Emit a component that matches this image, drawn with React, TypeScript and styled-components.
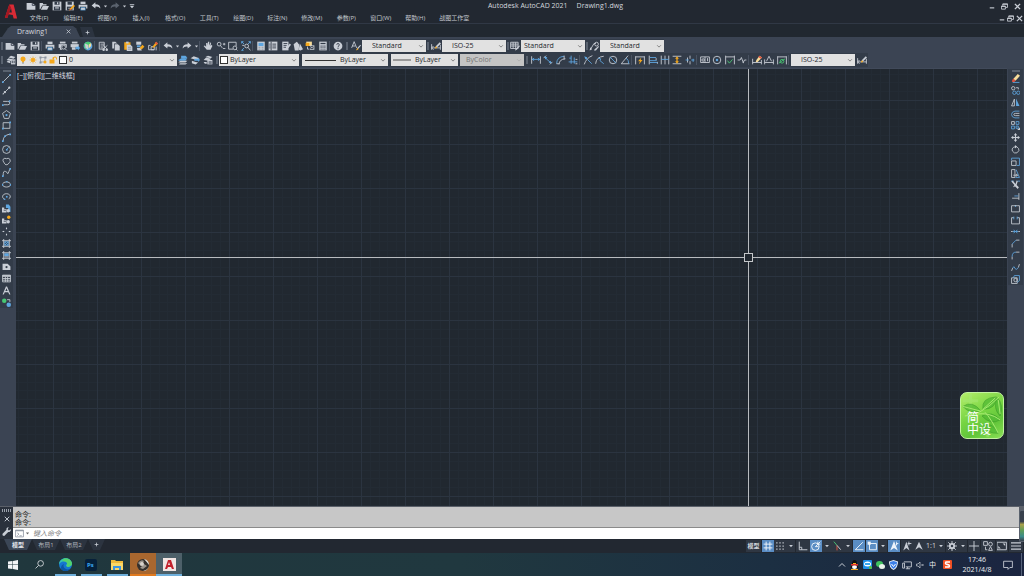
import React from "react";
import styled, { createGlobalStyle, css } from "styled-components";

const color = {
  chrome: "#222831",
  dock: "#3b4453",
  bar: "#333c49",
  canvas: "#212830",
  line: "#c9ced6",
  blue: "#5fa6e0",
  field: "#e1e1e1",
};

const Global = createGlobalStyle`
  *, *::before, *::after { box-sizing: border-box; }
  html, body { margin: 0; background: ${color.chrome}; }
  body, button, input, select {
    font-family: "Open Sans", "Noto Sans CJK SC", sans-serif;
    font-size: 7px;
    line-height: 10px;
  }
  button, input, select { border: 0; padding: 0; margin: 0; background: none; color: inherit; }
`;

/* ---------- icons ---------- */

type Shape = [string, string];

const tones: Record<string, string> = {
  w: "#c9ced6",
  b: "#5fa6e0",
  y: "#f5a81c",
  c: "#f7dc9a",
  r: "#e0523f",
  g: "#48c774",
  k: "#333c49",
  n: "#8b939f",
};

const circle = (x: number, y: number, r: number) =>
  `M${x - r} ${y}a${r} ${r} 0 1 0 ${2 * r} 0a${r} ${r} 0 1 0 ${-2 * r} 0`;
const box = (x: number, y: number, w: number, h: number) => `M${x} ${y}h${w}v${h}h${-w}z`;

/* A lower-case tone strokes the path, an upper-case tone fills it. */
const icons: Record<string, Shape[]> = {
  New: [["W", "M1 3h9l5 4v7H1z"], ["k", "M10 3v4h5"]],
  Open: [["W", "M1 3h5l1 2h5v2H5l-3 6H1z"], ["W", "M6 8h10l-3 6H3z"]],
  Save: [["W", box(1, 1, 14, 14)], ["K", box(4, 1, 8, 5)], ["K", box(3, 9, 10, 6)], ["W", box(5, 10, 6, 1)], ["W", box(5, 12, 6, 1)], ["W", box(8, 2, 2, 3)]],
  "Save As": [["W", box(1, 1, 13, 14)], ["K", box(4, 1, 7, 5)], ["K", box(3, 9, 9, 6)], ["W", box(5, 11, 4, 1)], ["Y", "M14 6l2 2-6 6-3 1 1-3z"], ["R", "M8 12l2 2-3 1z"]],
  Plot: [["W", box(4, 1, 8, 4)], ["W", "M1 6h14v6h-2V9H3v3H1z"], ["B", box(4, 10, 8, 5)], ["W", box(5, 11, 6, 3)]],
  "Plot Preview": [["W", box(3, 1, 9, 3)], ["W", "M1 5h13v6H1z"], ["W", box(3, 11, 4, 3)], ["K", circle(9, 10, 4)], ["w", circle(9, 10, 3)], ["w", "M11 12l3 3"]],
  Publish: [["W", box(3, 1, 9, 3)], ["W", "M1 5h13v5H1z"], ["W", box(3, 10, 6, 4)], ["B", "M9 9h4V7l3 4-3 4v-2H9z"]],
  "3D Print": [["B", circle(8, 8, 7)], ["G", "M3 3q5-4 10 0l-4 5-3 6Q-1 10 3 3z"], ["W", "M3 4l5 2v7l-4-2z"], ["C", "M9 6l4-3v5l-4 4z"]],
  Cut: [["w", box(2, 2, 8, 11)], ["w", "M4 5h6M4 8h4M4 11h4"], ["w", "M8 7l7 6M15 7l-7 6"], ["W", circle(14, 14, 2)], ["W", circle(9, 14, 2)]],
  Copy: [["W", "M2 1h5l3 3v8H2z"], ["K", "M5 4h6l4 4v8H5z"], ["W", "M6 5h5l3 3v7H6z"]],
  Paste: [["Y", box(2, 2, 10, 12)], ["W", box(5, 1, 4, 3)], ["W", "M6 6h6l3 3v7H6z"], ["n", "M8 10h5M8 13h5"]],
  "Match Properties": [["W", box(2, 1, 8, 5)], ["B", box(3, 7, 6, 3)], ["Y", "M12 6l3 3-5 5-3-3z"], ["W", "M3 11h5l3 4H4z"]],
  "Block Editor": [["w", "M1 7v7h9M1 7h3M5 9h5v5H5z"], ["Y", "M13 1l3 3-6 6-3 1 1-3z"], ["R", "M13 1l3 3-2 2-3-3z"], ["w", "M13 9v6"]],
  Undo: [["W", "M1 7l6-5v3q8 0 8 7-3-4-8-3v3z"]],
  Redo: [["W", "M15 7L9 2v3q-8 0-8 7 3-4 8-3v3z"]],
  Pan: [["W", "M3 7l2 2V3h2v4l1-6h2v6l2-5 1 1-1 5 2-2 1 2-3 6H6L1 8z"]],
  "Zoom Realtime": [["w", circle(5, 5, 3)], ["w", "M7 7l3 4M11 5h4M13 3v4M11 12h4"]],
  "Zoom Window": [["w", "M1 2h12v6M1 2v11h7"], ["w", circle(11, 11, 3)], ["w", "M13 13l2 2"]],
  "Zoom Extents": [["b", "M1 1l4 4M15 1l-4 4M1 15l4-4M1 1h3M1 1v3M15 1h-3M15 1v3M1 15h3"], ["w", circle(9, 8, 3)], ["w", "M11 10l4 5M2 7h3"]],
  Properties: [["W", box(2, 1, 12, 14)], ["B", box(4, 3, 8, 5)], ["n", "M4 10h3M9 10h3M4 13h3M9 13h3"]],
  DesignCenter: [["W", box(1, 1, 14, 14)], ["k", "M5 1v14M7 5h6M7 8h6M7 11h6M2 5h2M2 8h2M2 11h2"]],
  "Tool Palettes": [["W", box(2, 1, 10, 14)], ["k", "M4 4h6M4 7h5M4 10h4"], ["W", "M14 4l2 2-4 5-3 1 1-3z"]],
  "Sheet Set": [["W", "M1 5l5-4 4 4-1 10H3z"], ["k", "M9 3l5 10"], ["W", "M11 4l5 9-4 2-3-1z"]],
  Markup: [["C", box(2, 1, 9, 7)], ["Y", box(1, 3, 6, 5)], ["W", box(8, 7, 7, 7)], ["k", box(9, 9, 4, 3)], ["w", "M4 9v4h3"]],
  Calculator: [["W", box(2, 1, 12, 14)], ["K", box(4, 3, 8, 2)], ["k", "M4 8h2M7 8h2M10 8h2M4 10h2M7 10h2M10 10h2M4 13h2M7 13h2M10 13h2"]],
  Help: [["W", circle(8, 8, 7)], ["k", "M6 6q0-2 2-2t2 2-2 3v1M8 11v2"]],
  "Text Style": [["w", "M1 11L5 1l4 10M2 8h5"], ["W", "M15 6l1 1-5 6-2 1 1-3z"], ["Y", "M10 11l2 2-4 2z"]],
  "Dimension Style": [["w", "M1 5v9M15 6v8M1 11h14M4 8l-3 3 3 3"], ["W", "M14 2l2 2-6 6-3 1 1-3z"], ["Y", "M8 8l2 3-4 1z"]],
  "Table Style": [["w", box(1, 2, 12, 10)], ["w", "M1 5h12M1 8h12M5 2v10M9 2v10"], ["W", "M15 7l1 1-5 6-3 1 1-3z"]],
  "Multileader Style": [["w", "M2 14L8 4h3"], ["w", circle(12, 5, 3)], ["W", "M15 8l1 1-5 6-3 0 1-2z"], ["W", "M1 15l1-5 3 3z"]],
  "Layer Properties": [["W", "M4 4l4-3 7 2-3 3z"], ["W", "M1 8l3-3 7 2-2 3z"], ["W", box(8, 7, 7, 8)], ["k", "M10 9v4M13 9v4"], ["W", "M1 11l2-2 4 1v3z"]],
  "Make Current": [["B", "M5 1h7l3 3-5 2-5-1z"], ["B", "M1 8l4-3h10l-3 4H1z"], ["W", "M1 11l3-2h11l-3 3H1z"], ["W", "M2 14l2-1h11l-3 2H2z"]],
  "Layer Previous": [["W", "M1 5l5-3 9 3-5 3z"], ["B", "M7 6h6V4l3 4-3 3V9H7z"], ["W", "M3 9l6 2 4 1-4 3-6-2z"]],
  "Layer States": [["W", "M4 3l4-2 7 2-3 2z"], ["W", "M1 8l4-4 8 2-4 3z"], ["W", box(7, 8, 8, 7)], ["k", "M9 11h5M9 13h5"], ["W", "M1 11h5v3H3z"]],
  Bulb: [["Y", circle(8, 6, 5)], ["Y", box(6, 10, 4, 3)], ["N", box(6, 13, 4, 2)]],
  Sun: [["Y", circle(8, 8, 4)], ["y", "M8 1v14M1 8h14M3 3l10 10M13 3L3 13"]],
  Freeze: [["n", box(3, 3, 9, 9)], ["N", box(1, 1, 4, 4)], ["N", box(11, 1, 4, 4)], ["N", box(1, 11, 4, 4)], ["Y", circle(12, 12, 3)]],
  Unlock: [["Y", box(1, 7, 10, 8)], ["y", "M9 7V4q0-2 3-2t3 2v3"], ["y", "M8 7V3h2"]],
  "Linear": [["w", "M1 2v12M15 2v12"], ["b", "M2 7h12M5 5L2 7l3 2M11 5l3 2-3 2"]],
  "Aligned": [["w", "M1 5l4-4M11 15l4-4"], ["b", "M3 4l10 9"], ["B", "M2 2l5 2-3 3z"], ["B", "M14 13l-5-1 3-3z"]],
  "Arc Length": [["w", "M5 15q0-8 10-9"], ["b", "M1 14Q1 3 13 2"], ["w", "M1 14h4M13 1v6"]],
  "Ordinate": [["b", "M5 1v13M10 4v10M1 11h14M2 5h3"], ["w", "M12 7h3M12 14h3"]],
  "Radius": [["w", "M15 1Q5 5 2 15"], ["b", "M4 4l10 10"], ["B", "M2 2l5 2-3 3z"]],
  "Jogged": [["w", "M1 14Q2 3 14 2"], ["b", "M5 5l4 1-1 3 6 5"]],
  "Diameter": [["w", circle(8, 8, 6)], ["b", "M3 3l10 10"]],
  "Angular": [["w", "M13 1L2 14h13"], ["b", "M10 5q4 3 4 9"]],
  "Quick Dimension": [["w", "M1 2v13M15 2v13M1 3h14"], ["Y", "M9 5L5 10h3l-2 5 6-7H9l1-3z"]],
  "Baseline": [["w", "M2 1v14M13 5v3M15 11v3"], ["b", "M3 4h10M3 9h11M3 12h12"]],
  "Continue": [["w", "M2 1v14M8 1v14M14 1v14"], ["b", "M2 7h12"]],
  "Space": [["w", "M1 2h14M1 14h14"], ["Y", "M8 2l3 4H9v4h2l-3 4-3-4h2V6H5z"]],
  "Break": [["w", "M8 1v5M8 10v5M4 4v8"], ["b", "M1 8h5M10 8h5M13 6v5"]],
  "Tolerance": [["w", box(1, 3, 14, 9)], ["w", "M8 3v9M12 5v5"], ["w", circle(5, 8, 2)]],
  "Center Mark": [["w", circle(8, 8, 6)], ["B", circle(8, 8, 2)]],
  "Inspection": [["w", "M1 1v14M15 1v14M1 3h14"], ["g", "M4 9l3 4 5-6"]],
  "Jogged Linear": [["w", "M1 8h4l2-4 3 8 2-4h3"], ["W", circle(10, 12, 1)]],
  "Dimension Edit": [["w", "M1 6v9M15 8v7M1 12h14"], ["C", "M12 1l4 3-7 7-3 0 1-3z"], ["R", "M12 1l4 3-2 2-4-3z"]],
  "Text Edit": [["w", "M1 7v8M15 7v8M1 12h14M4 10l4-8 4 8"]],
  "Dimension Update": [["w", "M1 2v13M15 2v13M1 3h14"], ["g", circle(8, 10, 3)], ["g", "M3 13l10-7"]],
  Line: [["w", "M2 14L14 2"], ["B", box(0, 13, 3, 3)], ["B", box(13, 0, 3, 3)]],
  "Construction Line": [["w", "M2 14L14 2"], ["W", circle(5, 11, 2)], ["W", circle(13, 3, 2)], ["W", circle(2, 14, 1)]],
  Polyline: [["w", "M2 6h8q4 0 4 3t-4 3H3"], ["B", box(0, 11, 3, 3)], ["B", box(12, 4, 3, 3)]],
  Polygon: [["w", "M8 1l7 5-3 9H4L1 6z"], ["B", circle(8, 9, 2)]],
  Rectangle: [["w", box(2, 3, 12, 10)], ["B", box(0, 12, 3, 3)], ["B", box(13, 1, 3, 3)]],
  Arc: [["w", "M2 14Q2 4 14 2"], ["B", box(0, 13, 3, 3)], ["B", box(4, 4, 3, 3)], ["B", box(13, 1, 3, 3)]],
  Circle: [["w", circle(8, 8, 7)], ["b", "M8 8l4-4"], ["B", box(7, 7, 3, 3)]],
  "Revision Cloud": [["w", "M2 4q3-3 6-1 3-2 6 1 2 4-1 6-2 4-6 4-2-1-4-5-2-2-1-5z"]],
  Spline: [["w", "M2 14q0-10 4-8t4 4 4-8"], ["B", box(0, 13, 3, 3)], ["B", box(13, 0, 3, 3)]],
  Ellipse: [["w", "M1 8c0-6 14-6 14 0s-14 6-14 0"], ["B", box(0, 7, 2, 3)], ["B", box(14, 7, 2, 3)], ["B", box(7, 2, 3, 2)]],
  "Ellipse Arc": [["w", "M5 13C-2 10 1 3 8 3s9 7 4 9"], ["B", box(7, 7, 3, 3)], ["B", box(3, 12, 3, 2)]],
  "Insert Block": [["W", "M0 6h4v3h4v6H0z"], ["B", "M7 1h5l3 4v9h-4V7H7z"], ["k", "M3 11h4"], ["W", circle(11, 12, 3)]],
  "Make Block": [["W", "M0 6h4v3h4v6H0z"], ["k", "M3 11h4"], ["Y", circle(12, 4, 3)], ["W", circle(11, 12, 3)]],
  Point: [["W", box(7, 1, 2, 3)], ["W", box(7, 12, 2, 3)], ["W", box(1, 7, 3, 2)], ["W", box(12, 7, 3, 2)]],
  Hatch: [["B", box(4, 4, 8, 8)], ["w", "M3 0v16M13 0v16M0 3h16M0 13h16"], ["k", "M5 9l4-4M7 11l4-4"]],
  Gradient: [["B", box(4, 4, 8, 5)], ["w", "M3 0v16M13 0v16M0 3h16M0 13h16"], ["N", box(4, 9, 8, 3)]],
  Region: [["W", "M1 3h9l5 5v6H1z"], ["K", circle(8, 9, 2)]],
  Table: [["w", box(1, 2, 14, 12)], ["W", box(1, 2, 14, 3)], ["w", "M1 8h14M1 11h14M6 5v9M10 5v9"]],
  "Multiline Text": [["W", "M1 15L7 1h2l6 14h-2l-2-4H5l-2 4zM6 9h4L8 4z"]],
  "Add Selected": [["G", circle(4, 5, 4)], ["B", circle(12, 12, 4)], ["w", "M9 3h5v4"]],
  Erase: [["C", "M12 0l4 3-8 9-4-3z"], ["R", "M4 8l4 4-2 2-4 0v-3z"], ["b", "M3 15h12"]],
  "Copy Object": [["w", circle(4, 4, 3)], ["w", "M9 3h4v3"], ["b", circle(6, 12, 3)], ["b", circle(13, 12, 3)]],
  Mirror: [["w", "M6 2v12H1z"], ["B", "M9 1l6 13H9z"]],
  Offset: [["b", "M15 2H7Q1 3 1 8t6 6h8"], ["w", "M15 6H8Q5 6 5 8t3 2h7"]],
  Array: [["w", box(1, 1, 5, 5)], ["b", box(9, 1, 5, 5)], ["b", box(1, 9, 5, 5)], ["b", box(9, 9, 4, 4)], ["W", "M16 11v5h-5z"]],
  Move: [["W", "M8 0l3 4H9v3h3V5l4 3-4 3V9H9v3h2l-3 4-3-4h2V9H4v2L0 8l4-3v2h3V4H5z"]],
  Rotate: [["w", "M10 3q5 3 4 7-3 6-8 4-5-3-4-7 2-4 6-4"], ["W", "M7 0l4 3-4 3z"]],
  Scale: [["b", "M1 6V2h14v13h-5"], ["w", box(1, 7, 8, 8)]],
  Stretch: [["w", "M1 1h6v14H1z"], ["b", "M9 1l6 14H8"], ["w", "M4 11h7M9 9l3 2-3 2"]],
  Trim: [["b", "M0 2h5M11 2h5"], ["W", "M3 1l5 6 2-6 2 1-2 7 4 4-2 3-5-5-2 2-1-1 2-3-5-6z"]],
  Extend: [["w", "M14 2v12M2 11h12"], ["b", "M6 7h7"]],
  "Break at Point": [["w", "M5 3H1v11h14V3h-4"], ["B", box(7, 2, 2, 3)], ["w", "M5 3h6"]],
  "Break Object": [["w", "M5 3H1v11h14V3h-4"], ["b", "M5 1v5M11 1v5"]],
  Join: [["b", "M3 8h10M5 5l2 3-2 3M11 5L9 8l2 3"], ["w", "M0 8h3M13 8h3"]],
  Chamfer: [["w", "M2 15V9M9 2h6"], ["b", "M2 9l7-7"]],
  Fillet: [["w", "M2 15v-5M9 2h6"], ["b", "M2 10q0-8 7-8"]],
  Blend: [["w", "M1 14l2-5M13 8l2-6"], ["b", "M3 9q2-5 4 0t6-1"]],
  Explode: [["w", box(1, 5, 10, 10)], ["b", "M4 5l2-4h9v9l-4 3"], ["w", circle(8, 9, 3)]],
  "Display Grid": [["w", "M5 1v14M11 1v14M1 5h14M1 11h14"]],
  "Snap Mode": [["W", [2, 7, 12].map((x) => [2, 7, 12].map((y) => box(x, y, 2, 2)).join("")).join("")]],
  Ortho: [["w", "M2 1v13h13M2 10h4v4"]],
  "Polar Tracking": [["w", circle(7, 9, 6)], ["w", "M7 9l8-8M7 9h5M11 1v4h4"]],
  Isodraft: [["r", "M8 7v8"], ["g", "M8 7L3 1"], ["w", "M8 7l6 7"]],
  "Object Snap Tracking": [["w", "M2 14L14 2M2 14h13"]],
  "Object Snap": [["w", box(4, 4, 11, 10)], ["W", box(1, 1, 5, 5)]],
  "Annotation Visibility": [["W", "M8 0l6 15-6-4-6 4z"], ["W", "M12 0l1 3 3 1-3 1-1 3-1-3z"]],
  "Auto Scale": [["W", "M7 1l5 14-5-4-5 4z"], ["w", "M11 1v6M9 4h6"]],
  "Annotation Scale": [["W", "M8 1l6 13-6-4-6 4z"]],
  Workspace: [["W", circle(8, 8, 5)], ["w", "M8 0v16M0 8h16M2 2l12 12M14 2L2 14"], ["K", circle(8, 8, 2)]],
  "Annotation Monitor": [["w", "M8 0v16M0 8h16"]],
  "Isolate Objects": [["w", box(1, 1, 6, 6)], ["w", circle(12, 5, 3)], ["w", "M9 15l3-6 3 6zM4 9v5h3"]],
  "Clean Screen": [["w", box(0, 2, 15, 12)], ["W", "M9 4h4v4zM6 12H2V8z"]],
  Customization: [["w", "M0 3h16M0 8h16M0 13h16"]],
  Close: [["w", "M2 2l12 12M14 2L2 14"]],
  Minimize: [["w", "M2 13h12"]],
  Restore: [["w", box(1, 7, 9, 7)], ["w", "M4 6V2h11v8h-4M4 3h11M1 8h9"]],
  Add: [["w", "M8 2v12M2 8h12"]],
  Settings: [["W", "M1 12l7-7q-1-4 4-5l-2 4 2 2 4-2q0 5-5 5l-7 7q-4 0-3-4z"]],
  More: [["W", "M2 7h12l-6 7z"], ["W", box(2, 3, 12, 2)]],
  Caret: [["W", "M3 5h10l-5 6z"]],
  Chevron: [["n", "M3 6l5 5 5-5"]],
  Up: [["w", "M2 11l6-6 6 6"]],
  Prompt: [["n", box(1, 2, 14, 12)], ["N", box(1, 2, 14, 2)], ["n", "M4 7l3 2-3 3M8 12h4"]],
  Search: [["w", circle(10, 6, 5)], ["w", "M6 10l-5 5"]],
  Network: [["w", "M3 3h12v8H6M9 11v3M6 14h7M1 5h3v8H1z"]],
  Volume: [["w", "M1 6h3l4-4v12l-4-4H1zM11 6l4 4M15 6l-4 4"]],
  Notifications: [["w", "M1 2h14v10h-4l-3 3v-3H1z"]],
};

const Svg = styled.svg<{ $size: number }>`
  display: block;
  flex: none;
  width: ${(p) => p.$size}px;
  height: ${(p) => p.$size}px;
`;

function Icon({ name, size = 10, weight = 1.4, tone }: { name: string; size?: number; weight?: number; tone?: string }) {
  return (
    <Svg $size={size} viewBox="0 0 16 16" aria-hidden="true">
      {icons[name].map(([t, d], i) => {
        const paint = tone ?? tones[t.toLowerCase()];
        return t === t.toLowerCase() ? (
          <path key={i} d={d} fill="none" stroke={paint} strokeWidth={weight} />
        ) : (
          <path key={i} d={d} fill={paint} fillRule="evenodd" />
        );
      })}
    </Svg>
  );
}

/* ---------- shared controls ---------- */

const center = css`
  display: flex;
  align-items: center;
  justify-content: center;
`;

const IconButton = styled.button<{ $w?: number }>`
  ${center}
  height: 11px;
  ${(p) => (p.$w ? `flex: none; width: ${p.$w}px;` : "flex: 1; min-width: 0;")}
`;

function Tool({ name, w, size, tone, weight }: { name: string; w?: number; size?: number; tone?: string; weight?: number }) {
  return (
    <IconButton $w={w} aria-label={name}>
      <Icon name={name} size={size} tone={tone} weight={weight} />
    </IconButton>
  );
}

const Page = styled.div`
  display: flex;
  flex-direction: column;
  min-height: 100vh;
  color: #d3d7dd;
  overflow: hidden;
`;

/* ---------- header ---------- */

const Header = styled.header`
  display: flex;
  height: 24px;
  background: ${color.chrome};
  border-bottom: 1px solid #303845;
`;

const LogoButton = styled.button`
  ${center}
  width: 24px;
  flex: none;
  padding-right: 2px;
`;

const HeaderRows = styled.div`
  flex: 1;
  min-width: 0;
`;

const HeaderRow = styled.div`
  display: flex;
  align-items: center;
  height: 12px;
`;

const Title = styled.h1`
  flex: 1;
  display: flex;
  justify-content: center;
  gap: 9px;
  margin: 0;
  font-size: 7px;
  font-weight: 400;
  white-space: nowrap;
`;

const WindowControls = styled.div<{ $w: number }>`
  display: flex;
  justify-content: flex-end;
  width: ${(p) => p.$w}px;
  margin-left: auto;
`;

const Menus = styled.nav`
  display: flex;
  padding-left: 5px;
  gap: 14px;
`;

const MenuButton = styled.button`
  height: 12px;
  min-width: 20px;
  font-size: 6px;
  color: #c4c8cf;
  white-space: nowrap;
`;

const menus = ["文件(F)", "编辑(E)", "视图(V)", "插入(I)", "格式(O)", "工具(T)", "绘图(D)", "标注(N)", "修改(M)", "参数(P)", "窗口(W)", "帮助(H)", "战图工作室"];

function AppHeader() {
  return (
    <Header>
      <LogoButton aria-label="Application menu">
        <svg width="14" height="17" viewBox="0 0 16 18" aria-hidden="true">
          <path d="M1 16L6 1h5l4 16h-4l-1-4-5-1-1 4z" fill="#d92b35" />
          <path d="M1 16L6 1l2 3-2 6-2 6z" fill="#a31822" />
          <path d="M8 5l1 5H6z" fill={color.chrome} />
        </svg>
      </LogoButton>
      <HeaderRows>
        <HeaderRow>
          <Tool name="New" w={13} />
          <Tool name="Open" w={13} />
          <Tool name="Save" w={13} />
          <Tool name="Save As" w={13} />
          <Tool name="Plot" w={13} />
          <Tool name="Undo" w={13} />
          <Tool name="Caret" w={6} size={5} />
          <Tool name="Redo" w={13} tone="#5a626e" />
          <Tool name="Caret" w={6} size={5} />
          <Tool name="More" w={9} size={6} />
          <Title>
            <span>Autodesk AutoCAD 2021</span>
            <span>Drawing1.dwg</span>
          </Title>
          <WindowControls $w={49}>
            <Tool name="Minimize" w={13} size={6} weight={3} />
            <Tool name="Restore" w={13} size={7} weight={2} />
            <Tool name="Close" w={13} size={7} weight={3} />
          </WindowControls>
        </HeaderRow>
        <HeaderRow>
          <Menus>
            {menus.map((m) => (
              <MenuButton key={m}>{m}</MenuButton>
            ))}
          </Menus>
          <WindowControls $w={30}>
            <Tool name="Minimize" w={9} size={6} weight={3} />
            <Tool name="Restore" w={9} size={7} weight={2} />
            <Tool name="Close" w={9} size={7} weight={3} />
          </WindowControls>
        </HeaderRow>
      </HeaderRows>
    </Header>
  );
}

/* ---------- file tabs ---------- */

const FileTabs = styled.div`
  display: flex;
  align-items: flex-end;
  height: 13px;
  padding-left: 2px;
  background: ${color.canvas};
`;

const FileTab = styled.div`
  display: flex;
  align-items: center;
  justify-content: space-between;
  width: 78px;
  height: 11px;
  padding: 0 9px 0 15px;
  background: ${color.dock};
  clip-path: polygon(0 100%, 6px 20%, 9px 0, 71px 0, 74px 20%, 100% 100%);
`;

const NewTab = styled.div`
  ${center}
  width: 15px;
  height: 10px;
  background: #2c3440;
  clip-path: polygon(0 0, 80% 0, 100% 100%, 20% 100%);
`;

/* ---------- toolbars ---------- */

const Toolbars = styled.section`
  display: flex;
  flex-direction: column;
  align-items: flex-start;
  padding: 2px 0 1px;
  background: ${color.dock};
`;

const Bar = styled.div`
  display: flex;
  align-items: center;
  height: 14px;
  background: ${color.bar};
`;

const Group = styled.div<{ $w: number }>`
  display: flex;
  flex: none;
  width: ${(p) => p.$w}px;
`;

const Divider = styled.span`
  flex: none;
  width: 3px;
  height: 10px;
  border-left: 1px solid #4a5362;
`;

const Grip = styled.span<{ $w?: number }>`
  flex: none;
  width: ${(p) => p.$w ?? 4}px;
  height: 8px;
  background: linear-gradient(#59626f, #59626f) center / 2px 100% no-repeat;
`;

const Field = styled.div<{ $w: number; $pad?: number; $gap?: number; $muted?: boolean }>`
  display: flex;
  align-items: center;
  gap: 2px;
  flex: none;
  width: ${(p) => p.$w}px;
  height: 12px;
  padding: 0 2px 0 ${(p) => p.$pad ?? 10}px;
  margin-right: ${(p) => p.$gap ?? 0}px;
  background: ${(p) => (p.$muted ? "#c4c4c4" : color.field)};
  color: #23272d;
`;

const Select = styled.select`
  appearance: none;
  flex: 1;
  min-width: 0;
  height: 12px;
  outline: 0;
  &:disabled {
    color: #747474;
    opacity: 1;
  }
`;

const Swatch = styled.span`
  flex: none;
  width: 8px;
  height: 8px;
  background: #fff;
  border: 1px solid #333;
`;

const Stroke = styled.span<{ $w: number; $h: number }>`
  flex: none;
  width: ${(p) => p.$w}px;
  height: ${(p) => p.$h}px;
  margin-right: 2px;
  background: ${(p) => (p.$h > 1 ? "#999" : "#333")};
`;

function Dropdown({ label, value, w, pad, gap, muted, children }: { label: string; value: string; w: number; pad?: number; gap?: number; muted?: boolean; children?: React.ReactNode }) {
  return (
    <Field $w={w} $pad={pad} $gap={gap} $muted={muted}>
      {children}
      <Select aria-label={label} disabled={muted}>
        <option>{value}</option>
      </Select>
      <Icon name="Chevron" size={6} weight={2} tone={muted ? "#aaa" : "#666"} />
    </Field>
  );
}

function Tools({ w, names }: { w: number; names: string[] }) {
  return (
    <Group $w={w}>
      {names.map((n) => (
        <Tool key={n} name={n} size={10} />
      ))}
    </Group>
  );
}

function ToolbarArea() {
  return (
    <Toolbars>
      <Bar>
        <Grip />
        <Tools w={37} names={["New", "Open", "Save"]} />
        <Divider />
        <Tools w={50} names={["Plot", "Plot Preview", "Publish", "3D Print"]} />
        <Divider />
        <Tools w={62} names={["Cut", "Copy", "Paste", "Match Properties", "Block Editor"]} />
        <Divider />
        <Tool name="Undo" w={12} />
        <Tool name="Caret" w={7} size={5} />
        <Tool name="Redo" w={12} />
        <Tool name="Caret" w={6} size={5} />
        <Divider />
        <Tools w={50} names={["Pan", "Zoom Realtime", "Zoom Window", "Zoom Extents"]} />
        <Divider />
        <Tools w={74} names={["Properties", "DesignCenter", "Tool Palettes", "Sheet Set", "Markup", "Calculator"]} />
        <Divider />
        <Tools w={12} names={["Help"]} />
        <Grip $w={5} />
        <Tools w={13} names={["Text Style"]} />
        <Dropdown label="Text style" value="Standard" w={64} />
        <Grip $w={3} />
        <Tools w={13} names={["Dimension Style"]} />
        <Dropdown label="Dimension style" value="ISO-25" w={64} />
        <Grip $w={3} />
        <Tools w={12} names={["Table Style"]} />
        <Dropdown label="Table style" value="Standard" w={64} pad={3} />
        <Grip $w={3} />
        <Tools w={12} names={["Multileader Style"]} />
        <Dropdown label="Multileader style" value="Standard" w={64} />
      </Bar>
      <Bar>
        <Grip />
        <Tools w={13} names={["Layer Properties"]} />
        <Dropdown label="Layer" value="0" w={160} pad={2}>
          <Icon name="Bulb" size={8} />
          <Icon name="Sun" size={8} />
          <Icon name="Freeze" size={8} />
          <Icon name="Unlock" size={8} weight={2} />
          <Swatch />
        </Dropdown>
        <Tools w={37} names={["Make Current", "Layer Previous", "Layer States"]} />
        <Grip $w={5} />
        <Dropdown label="Color" value="ByLayer" w={80} pad={1} gap={3}>
          <Swatch />
        </Dropdown>
        <Dropdown label="Linetype" value="ByLayer" w={86} pad={3} gap={3}>
          <Stroke $w={31} $h={1} />
        </Dropdown>
        <Dropdown label="Lineweight" value="ByLayer" w={67} pad={2} gap={2}>
          <Stroke $w={18} $h={2} />
        </Dropdown>
        <Dropdown label="Plot style" value="ByColor" w={64} pad={6} muted />
        <Grip $w={6} />
        <Tools w={49} names={["Linear", "Aligned", "Arc Length", "Ordinate"]} />
        <Divider />
        <Tools w={49} names={["Radius", "Jogged", "Diameter", "Angular"]} />
        <Divider />
        <Tools w={62} names={["Quick Dimension", "Baseline", "Continue", "Space", "Break"]} />
        <Divider />
        <Tools w={49} names={["Tolerance", "Center Mark", "Inspection", "Jogged Linear"]} />
        <Divider />
        <Tools w={37} names={["Dimension Edit", "Text Edit", "Dimension Update"]} />
        <Divider />
        <Dropdown label="Current dimension style" value="ISO-25" w={64} />
        <Tools w={13} names={["Dimension Style"]} />
      </Bar>
    </Toolbars>
  );
}

/* ---------- workspace ---------- */

const Workspace = styled.main`
  display: flex;
  flex: 1;
  min-height: 438px;
  background: ${color.dock};
`;

const Dock = styled.aside<{ $side: "left" | "right" }>`
  flex: none;
  width: ${(p) => (p.$side === "left" ? 16 : 17)}px;
  padding: ${(p) => (p.$side === "left" ? "1px 3px 0 0" : "1px 1px 0 1px")};
`;

const ToolColumn = styled.div`
  display: flex;
  flex-direction: column;
  align-items: center;
  padding-top: 1px;
  background: ${color.bar};
`;

const ColumnGrip = styled.span`
  width: 8px;
  height: 2px;
  margin-bottom: 1px;
  background: #59626f;
`;

const ColumnTools = styled.div<{ $h: number }>`
  display: grid;
  grid-auto-rows: 1fr;
  align-items: center;
  height: ${(p) => p.$h}px;
`;

const Canvas = styled.div`
  position: relative;
  flex: 1;
  min-width: 0;
  border-top: 1px solid #414a5a;
  background: ${color.canvas};
  overflow: hidden;
`;

const GridLines = styled.svg`
  position: absolute;
  inset: 0;
  width: 100%;
  height: 100%;
`;

const ViewControls = styled.div`
  position: absolute;
  top: 2px;
  left: 1px;
  display: flex;
`;

const ViewButton = styled.button`
  font-family: "Liberation Sans", "Noto Sans CJK SC", sans-serif;
  color: #d8dbe0;
`;

const CrossX = styled.div`
  position: absolute;
  top: 188px;
  left: 0;
  right: 0;
  height: 1px;
  background: #b9bcc0;
`;

const CrossY = styled.div`
  position: absolute;
  left: 732px;
  top: 0;
  bottom: 0;
  width: 1px;
  background: #b9bcc0;
`;

const PickBox = styled.div`
  position: absolute;
  left: 728px;
  top: 184px;
  width: 9px;
  height: 9px;
  border: 1px solid #c4c7ca;
  background: ${color.canvas};
`;

const Badge = styled.div`
  position: absolute;
  right: 3px;
  bottom: 67px;
  width: 44px;
  height: 47px;
  border: 1px solid #c2f3a0;
  border-radius: 7px;
  overflow: hidden;
  background: linear-gradient(150deg, #b4ee6a, #78d544 45%, #62c53a 70%, #8ae056);
`;

const BadgeArt = styled.svg`
  position: absolute;
  inset: 0;
  width: 100%;
  height: 100%;
`;

const BadgeText = styled.div`
  position: absolute;
  left: 6px;
  bottom: 3px;
  font: 400 12px/12px "Noto Sans CJK SC", sans-serif;
  color: #fff;
  white-space: pre-line;
`;

const drawTools = ["Line", "Construction Line", "Polyline", "Polygon", "Rectangle", "Arc", "Circle", "Revision Cloud", "Spline", "Ellipse", "Ellipse Arc", "Insert Block", "Make Block", "Point", "Hatch", "Gradient", "Region", "Table", "Multiline Text", "Add Selected"];
const modifyTools = ["Erase", "Copy Object", "Mirror", "Offset", "Array", "Move", "Rotate", "Scale", "Stretch", "Trim", "Extend", "Break at Point", "Break Object", "Join", "Chamfer", "Fillet", "Blend", "Explode"];

function SideTools({ side, names, h }: { side: "left" | "right"; names: string[]; h: number }) {
  return (
    <Dock $side={side}>
      <ToolColumn>
        <ColumnGrip />
        <ColumnTools $h={h}>
          {names.map((n) => (
            <Tool key={n} name={n} w={12} size={9} weight={1.5} />
          ))}
        </ColumnTools>
      </ToolColumn>
    </Dock>
  );
}

function DrawingArea() {
  return (
    <Workspace>
      <SideTools side="left" names={drawTools} h={235} />
      <Canvas>
        <GridLines aria-hidden="true">
          <defs>
            <pattern id="grid" x="37" y="31" width="44" height="44" patternUnits="userSpaceOnUse">
              <path d="M9.5 0v44M18.5 0v44M26.5 0v44M35.5 0v44M0 9.5h44M0 18.5h44M0 26.5h44M0 35.5h44" stroke="#232b34" />
              <path d="M.5 0v44M0 .5h44" stroke="#2b3440" />
            </pattern>
          </defs>
          <rect width="100%" height="100%" fill="url(#grid)" />
        </GridLines>
        <ViewControls>
          <ViewButton>[−]</ViewButton>
          <ViewButton>[俯视]</ViewButton>
          <ViewButton>[二维线框]</ViewButton>
        </ViewControls>
        <CrossX />
        <CrossY />
        <PickBox />
        <Badge>
          <BadgeArt viewBox="0 0 44 47" aria-hidden="true">
            <path d="M10 1v20M2 8h16M28 30v16" stroke="#a6e877" strokeWidth="3" opacity=".5" />
            <g fill="#4fb834" stroke="#2f8f22" strokeWidth=".7" opacity=".7">
              <path d="M23 17q-2-12 14-13 0 13-14 13z" />
              <path d="M2 14q10-7 19 5-11 4-19-5z" />
              <path d="M38 5q7 7 3 19-8-8-3-19z" />
              <path d="M22 24q10-6 19 4-10 6-19-4z" />
              <path d="M24 34q9-4 15 8-11 1-15-8z" />
            </g>
            <path d="M4 24q16 0 36-20M16 22q14-2 25 6M25 20q6 6 14 22M23 17L36 5M2 14l19 5M39 7l2 15" stroke="#a9ec72" fill="none" />
          </BadgeArt>
          <BadgeText>{"简\n中设"}</BadgeText>
        </Badge>
      </Canvas>
      <SideTools side="right" names={modifyTools} h={212} />
    </Workspace>
  );
}

/* ---------- command line ---------- */

const CommandPanel = styled.section`
  position: relative;
  display: flex;
  height: 33px;
  padding-top: 1px;
  background: #5b6069;
`;

const CommandRail = styled.div`
  display: flex;
  flex-direction: column;
  align-items: center;
  justify-content: space-between;
  width: 13px;
  flex: none;
  padding: 2px 0;
  background: #2a313c;
`;

const RailGrip = styled.span`
  width: 10px;
  height: 3px;
  background: repeating-linear-gradient(90deg, #9aa1ab 0 1px, transparent 1px 2px);
`;

const CommandBody = styled.div`
  display: flex;
  flex-direction: column;
  flex: 1;
  margin-right: 5px;
  background: #fff;
`;

const History = styled.div`
  height: 21px;
  padding: 4px 2px 0;
  border-bottom: 1px solid #8a8a8a;
  background: #c7c7c7;
  color: #222;
  line-height: 8px;
`;

const HistoryLine = styled.p`
  margin: 0;
`;

const CommandInputRow = styled.label`
  display: flex;
  align-items: center;
  flex: 1;
  padding-left: 2px;
  gap: 1px;
`;

const CommandInput = styled.input`
  flex: 1;
  margin-left: 2px;
  outline: 0;
  color: #333;
  font-style: italic;
  &::placeholder { color: #858585; opacity: 1; }
`;

const EdgeMeter = styled.div`
  position: absolute;
  right: 0;
  top: 4px;
  z-index: 1;
  width: 5px;
  height: 32px;
  border: 1px solid #59616d;
  border-right: 0;
  border-radius: 2px 0 0 2px;
  background: linear-gradient(#38404c 35%, #a9a04a 45%, #5d9c58 65%, #3a8b8b 85%, #38404c);
`;

function CommandLine() {
  return (
    <CommandPanel>
      <CommandRail>
        <RailGrip />
        <Tool name="Close" w={12} size={6} weight={2.5} />
        <Tool name="Settings" w={12} size={9} />
      </CommandRail>
      <CommandBody>
        <History>
          <HistoryLine>命令:</HistoryLine>
          <HistoryLine>命令:</HistoryLine>
        </History>
        <CommandInputRow>
          <Icon name="Prompt" size={9} />
          <Icon name="Caret" size={5} tone="#666" />
          <CommandInput placeholder="键入命令" aria-label="命令" />
        </CommandInputRow>
      </CommandBody>
      <EdgeMeter />
    </CommandPanel>
  );
}

/* ---------- status bar ---------- */

const StatusBar = styled.footer`
  display: flex;
  align-items: flex-start;
  height: 14px;
  padding: 0 1px 0 4px;
  background: ${color.chrome};
`;

const LayoutTab = styled.button<{ $active?: boolean; $w?: number }>`
  ${center}
  width: ${(p) => p.$w ?? 28}px;
  height: 11px;
  font-size: 6px;
  font-weight: ${(p) => (p.$active ? 700 : 400)};
  color: ${(p) => (p.$active ? "#e4e7eb" : "#b0b6bf")};
  background: ${(p) => (p.$active ? "#3b4656" : "#2c3440")};
  clip-path: polygon(0 0, 100% 0, calc(100% - 5px) 100%, 5px 100%);
`;

const StatusTools = styled.div`
  display: flex;
  gap: 1px;
  margin: 1px 0 0 auto;
`;

const StatusGroup = styled.div`
  display: flex;
  background: #2f3743;
`;

const Toggle = styled.button<{ $w?: number; $on?: boolean; $label?: boolean }>`
  ${center}
  gap: 2px;
  width: ${(p) => p.$w ?? 12}px;
  height: 12px;
  background: ${(p) => (p.$on ? "#5a8dc4" : "transparent")};
  font-size: ${(p) => (p.$label ? 6 : 7)}px;
  font-weight: ${(p) => (p.$label ? 700 : 400)};
`;

function Status({ name, on }: { name: string; on?: boolean }) {
  return (
    <Toggle $on={on} aria-label={name} aria-pressed={on}>
      <Icon name={name} size={10} tone={on ? "#eef4fb" : undefined} weight={1.5} />
    </Toggle>
  );
}

function StatusCaret({ label }: { label: string }) {
  return (
    <Toggle $w={9} aria-label={label}>
      <Icon name="Caret" size={6} />
    </Toggle>
  );
}

function StatusArea() {
  return (
    <StatusBar>
      <LayoutTab $active>模型</LayoutTab>
      <LayoutTab>布局1</LayoutTab>
      <LayoutTab>布局2</LayoutTab>
      <LayoutTab $w={17} aria-label="New layout">
        <Icon name="Add" size={5} weight={2.5} />
      </LayoutTab>
      <StatusTools>
        <StatusGroup>
          <Toggle $w={15} $label>模型</Toggle>
        </StatusGroup>
        <StatusGroup>
          <Status name="Display Grid" on />
          <Status name="Snap Mode" />
          <StatusCaret label="Snap settings" />
        </StatusGroup>
        <StatusGroup>
          <Toggle $w={14} aria-label="Ortho">
            <Icon name="Ortho" weight={1.5} />
          </Toggle>
          <Status name="Polar Tracking" on />
          <StatusCaret label="Polar settings" />
          <Status name="Isodraft" />
          <StatusCaret label="Isodraft settings" />
        </StatusGroup>
        <StatusGroup>
          <Status name="Object Snap Tracking" on />
        </StatusGroup>
        <StatusGroup>
          <Status name="Object Snap" on />
          <StatusCaret label="Object snap settings" />
        </StatusGroup>
        <StatusGroup>
          <Status name="Annotation Visibility" on />
        </StatusGroup>
        <StatusGroup>
          <Status name="Auto Scale" />
          <Status name="Annotation Scale" />
          <Toggle $w={20}>
            1:1
            <Icon name="Caret" size={6} />
          </Toggle>
        </StatusGroup>
        <StatusGroup>
          <Status name="Workspace" />
          <StatusCaret label="Workspace list" />
        </StatusGroup>
        <StatusGroup>
          <Status name="Annotation Monitor" />
        </StatusGroup>
        <StatusGroup>
          <Toggle $w={14} aria-label="Isolate Objects">
            <Icon name="Isolate Objects" />
          </Toggle>
        </StatusGroup>
        <StatusGroup>
          <Status name="Clean Screen" />
        </StatusGroup>
        <StatusGroup>
          <Toggle $w={14} aria-label="Customization">
            <Icon name="Customization" weight={1.8} />
          </Toggle>
        </StatusGroup>
      </StatusTools>
    </StatusBar>
  );
}

/* ---------- taskbar ---------- */

const Taskbar = styled.nav`
  display: flex;
  height: 23px;
  background: linear-gradient(90deg, #20373d, #20383f 45%, #1c2f42 75%, #1b2540);
`;

const Task = styled.button<{ $bg?: string; $line?: string }>`
  ${center}
  position: relative;
  width: 26px;
  height: 23px;
  background: ${(p) => p.$bg ?? "transparent"};
  &::after {
    content: "";
    position: absolute;
    left: ${(p) => (p.$bg ? 0 : 3)}px;
    right: ${(p) => (p.$bg ? 0 : 2)}px;
    bottom: 0;
    height: 2px;
    background: ${(p) => p.$line ?? "transparent"};
  }
`;

const Tray = styled.div`
  display: flex;
  align-items: center;
  margin-left: auto;
  padding-right: 4px;
`;

const TrayButton = styled.button<{ $w?: number }>`
  ${center}
  width: ${(p) => p.$w ?? 13}px;
  height: 23px;
  color: #e8ebef;
`;

const Clock = styled.time`
  width: 44px;
  text-align: center;
  color: #eef0f3;
`;

const ClockLine = styled.span`
  display: block;
`;

const ShowDesktop = styled.button`
  width: 3px;
  height: 23px;
  border-left: 1px solid #56627a;
`;

const underline = "#6fb0dc";

function WindowsTaskbar() {
  return (
    <Taskbar>
      <Task aria-label="Start">
        <svg width="10" height="10" viewBox="0 0 20 20" aria-hidden="true">
          <path d="M0 3l9-1v7H0zM10 2l10-2v9H10zM0 10h9v8l-9-1zM10 10h10v10l-10-2z" fill="#f2f4f6" />
        </svg>
      </Task>
      <Task aria-label="Search">
        <Icon name="Search" size={9} tone="#e8ebef" />
      </Task>
      <Task aria-label="Edge" $line={underline}>
        <svg width="13" height="13" viewBox="0 0 16 16" aria-hidden="true">
          <circle cx="8" cy="8" r="8" fill="#1577cf" />
          <path d="M0 8C0-1 12-2 15 4q3 6-4 7-4-1-1-4 0-3-4-3-5 1-6 4z" fill="#35c2b0" />
          <path d="M4 2q7-4 11 2 3 6-4 7-3-1-1-3 0-4-5-4z" fill="#53d36d" />
          <path d="M6 7q-2 6 4 7 3 0 4-1-5 6-11 1-2-4 3-7z" fill="#0c56a5" />
        </svg>
      </Task>
      <Task aria-label="Photoshop" $line={underline}>
        <svg width="12" height="12" viewBox="0 0 12 12" aria-hidden="true">
          <rect width="12" height="12" rx="2" fill="#06203a" />
          <text x="2" y="8" fontSize="6" fontWeight="700" fill="#3ba9f5" fontFamily="Open Sans, sans-serif">Ps</text>
        </svg>
      </Task>
      <Task aria-label="File Explorer" $line={underline}>
        <svg width="12" height="12" viewBox="0 0 12 12" aria-hidden="true">
          <path d="M0 1h4l1 1h7v9H0z" fill="#f0b93a" />
          <path d="M0 4h12v7H0z" fill="#fbd767" />
          <path d="M2 11V7h8v4H8V9H4v2z" fill="#3d95df" />
        </svg>
      </Task>
      <Task aria-label="Media" $bg="#a9672f" $line="#e07a1f">
        <svg width="14" height="14" viewBox="0 0 14 14" aria-hidden="true">
          <circle cx="7" cy="7" r="6" fill="#34302d" />
          <path d="M8 1q5 1 5 6-3-4-5-6zM13 8q-1 5-6 5 5-1 6-5z" fill="#e8e6e2" />
          <path d="M2 5q3-4 6-2L5 8zM4 10l4-4 3 2-4 3z" fill="#9b958e" />
          <circle cx="6" cy="6" r="2" fill="#d8d3cc" />
        </svg>
      </Task>
      <Task aria-label="AutoCAD" $bg="#4d6069" $line={underline}>
        <svg width="13" height="13" viewBox="0 0 13 13" aria-hidden="true">
          <rect width="13" height="13" fill="#f1e5e3" />
          <path d="M2 11L5 2h3l3 9H9L8 9H5l-1 2z" fill="#c3202c" />
          <path d="M6 4l1 3H5z" fill="#f1e5e3" />
        </svg>
      </Task>
      <Tray>
        <TrayButton aria-label="Show hidden icons">
          <Icon name="Up" size={8} weight={2} />
        </TrayButton>
        <TrayButton aria-label="QQ">
          <svg width="9" height="10" viewBox="0 0 18 20" aria-hidden="true">
            <path d="M4 8q0-8 5-8t5 8l3 8H1z" fill="#111" />
            <ellipse cx="9" cy="14" rx="5" ry="4" fill="#fff" />
            <path d="M2 8h14v3H2z" fill="#e2332b" />
            <path d="M2 18h14v2H2zM6 6h6v2H6z" fill="#f5a81c" />
          </svg>
        </TrayButton>
        <TrayButton aria-label="Messenger">
          <svg width="9" height="9" viewBox="0 0 18 18" aria-hidden="true">
            <rect width="18" height="18" rx="2" fill="#1d8ee8" />
            <ellipse cx="9" cy="8" rx="7" ry="5" fill="#fff" />
            <path d="M4 6h10v4H4z" fill="#37a7f0" />
            <circle cx="15" cy="15" r="3" fill="#5ac83b" />
          </svg>
        </TrayButton>
        <TrayButton aria-label="WeChat">
          <svg width="9" height="8" viewBox="0 0 18 16" aria-hidden="true">
            <ellipse cx="7" cy="6" rx="7" ry="6" fill="#3fc35f" />
            <ellipse cx="12" cy="11" rx="6" ry="5" fill="#e9f3ea" />
          </svg>
        </TrayButton>
        <TrayButton aria-label="Security">
          <svg width="9" height="10" viewBox="0 0 18 20" aria-hidden="true">
            <path d="M0 3l9-3 9 3q0 13-9 17Q0 16 0 3z" fill="#e9f1fb" />
            <path d="M2 4l7-2 7 2q0 10-7 14Q2 14 2 4z" fill="#3b7fe8" />
            <path d="M5 8l4 5 4-5" stroke="#fff" strokeWidth="2" fill="none" />
          </svg>
        </TrayButton>
        <TrayButton aria-label="Network">
          <Icon name="Network" size={10} />
        </TrayButton>
        <TrayButton aria-label="Volume">
          <Icon name="Volume" size={8} />
        </TrayButton>
        <TrayButton>中</TrayButton>
        <TrayButton $w={16} aria-label="Sogou input">
          <svg width="9" height="9" viewBox="0 0 18 18" aria-hidden="true">
            <rect width="18" height="18" rx="2" fill="#ef4f23" />
            <path d="M14 4H6q-2 3 0 4l6 2q2 2 0 4H4" stroke="#fff" strokeWidth="3" fill="none" />
          </svg>
        </TrayButton>
        <Clock dateTime="2021-04-08T17:46">
          <ClockLine>17:46</ClockLine>
          <ClockLine>2021/4/8</ClockLine>
        </Clock>
        <TrayButton $w={18} aria-label="Notifications">
          <Icon name="Notifications" size={10} />
        </TrayButton>
      </Tray>
      <ShowDesktop aria-label="Show desktop" />
    </Taskbar>
  );
}

export default function App() {
  return (
    <>
      <Global />
      <Page>
        <AppHeader />
        <FileTabs>
          <FileTab>
            <span>Drawing1</span>
            <Tool name="Close" w={6} size={5} weight={2.5} />
          </FileTab>
          <NewTab>
            <Tool name="Add" w={6} size={5} weight={2.5} />
          </NewTab>
        </FileTabs>
        <ToolbarArea />
        <DrawingArea />
        <CommandLine />
        <StatusArea />
        <WindowsTaskbar />
      </Page>
    </>
  );
}
